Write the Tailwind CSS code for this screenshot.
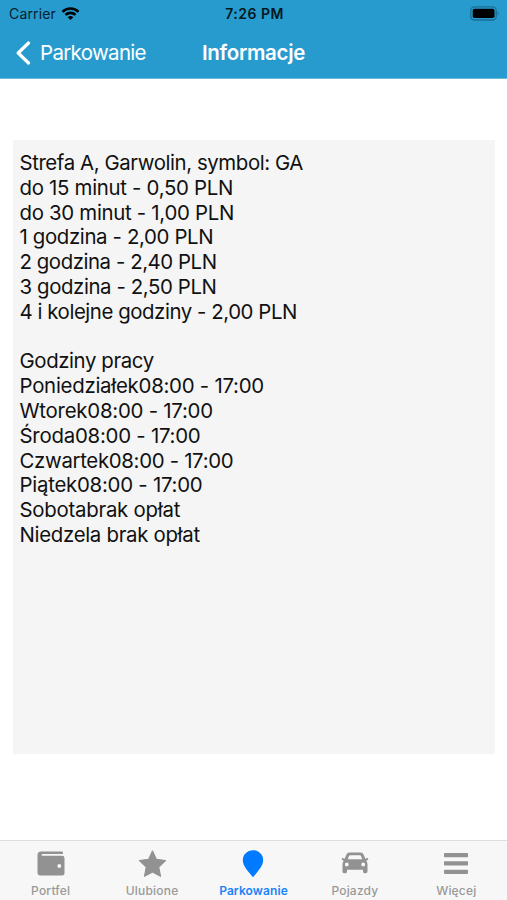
<!DOCTYPE html>
<html lang="pl">
<head>
<meta charset="utf-8">
<title>Informacje</title>
<script src="https://cdn.jsdelivr.net/npm/@tailwindcss/browser@4"></script>
</head>
<body class="bg-white">
<div class="flex h-[900px] w-[507px] flex-col overflow-hidden bg-white font-['Inter',sans-serif]">
  <header class="h-[79px] shrink-0 border-b border-[#6bbbdc] bg-[#289bce]">
    <div class="grid h-[27px] grid-cols-3 items-center pl-[9px] pr-[7px] text-[#06202c]">
      <div class="flex items-center gap-[5px]">
        <span class="pt-px text-[14px] leading-[26px] tracking-[0.16px]">Carrier</span>
        <svg class="h-[14px] w-[19px]" viewBox="0 0 18 14" fill="none" stroke="#000" stroke-width="2.6"><path d="M1 4.800a11.300 11.300 0 0 1 16 0M4 7.900a7.100 7.100 0 0 1 10 0"/><path d="M9 13.100 6.200 10.300a4 4 0 0 1 5.600 0z" fill="#000" stroke="none"/></svg>
      </div>
      <span class="pt-px text-center text-[14px] font-semibold leading-[26px] tracking-[0.5px] text-[#031720]">7:26 PM</span>
      <svg class="h-[15px] w-[30px] justify-self-end" viewBox="0 0 30 15"><rect x=".8" y=".8" width="25.4" height="13.2" rx="3.6" fill="none" stroke="#176f95" stroke-width="1.3"/><rect x="2.7" y="2.7" width="21.8" height="9.4" rx="1.8" fill="#000"/><path d="M27.6 5.2q2.2 2.2 0 4.4z" fill="#176f95"/></svg>
    </div>
    <div class="grid h-[51px] grid-cols-[186px_135px_186px] items-center text-white">
      <div class="flex items-center gap-[9px] pl-[16px]">
        <svg class="h-[24px] w-[15px]" viewBox="0 0 15 24" fill="none" stroke="currentColor" stroke-width="3.2" stroke-linecap="round" stroke-linejoin="round"><path d="M12.5 2 2.200 12l10.300 10"/></svg>
        <span class="text-[20.5px] leading-[30px] tracking-[-0.68px]">Parkowanie</span>
      </div>
      <h1 class="text-center text-[20.5px] font-semibold leading-[30px] tracking-[-0.3px]">Informacje</h1>
    </div>
  </header>

  <main class="grow px-[13px] pt-[61px]">
    <div class="h-[614px] w-[482px] bg-[#f5f5f5] pl-[6.5px] pt-[11px] text-[20.4px] leading-[24.8px] text-[#111] whitespace-nowrap">
      <p class="tracking-[-0.41px]">Strefa A, Garwolin, symbol: GA</p>
      <p class="tracking-[-0.3px]">do 15 minut - 0,50 PLN</p>
      <p class="tracking-[-0.3px]">do 30 minut - 1,00 PLN</p>
      <p class="tracking-[-0.36px]">1 godzina - 2,00 PLN</p>
      <p class="tracking-[-0.44px]">2 godzina - 2,40 PLN</p>
      <p class="tracking-[-0.4px]">3 godzina - 2,50 PLN</p>
      <p class="tracking-[-0.44px]">4 i kolejne godziny - 2,00 PLN</p>
      <p class="mt-[24.8px] tracking-[-0.4px]">Godziny pracy</p>
      <p class="tracking-[-0.26px]">Poniedziałek08:00 - 17:00</p>
      <p class="tracking-[-0.24px]">Wtorek08:00 - 17:00</p>
      <p class="tracking-[-0.24px]">Środa08:00 - 17:00</p>
      <p class="tracking-[-0.32px]">Czwartek08:00 - 17:00</p>
      <p class="tracking-[-0.25px]">Piątek08:00 - 17:00</p>
      <p class="tracking-[-0.25px]">Sobotabrak opłat</p>
      <p class="tracking-[-0.3px]">Niedzela brak opłat</p>
    </div>
  </main>

  <nav class="grid h-[60px] shrink-0 grid-cols-5 border-t border-[#dedede] bg-[#f7f7f7] text-center text-[12px] font-medium leading-[14px] tracking-[0.2px] text-[#999]">
    <div class="flex flex-col items-center pt-[8px]">
      <svg class="h-[30px] w-[30px]" viewBox="0 0 30 30"><path d="M5 2.500h21q1 0 1 1.200V5H6.500a.8.800 0 0 0 0 1.800H26q2.500 0 2.500 2.400V24q0 2.500-2.500 2.500H4.500Q1.500 26.500 1.500 23.500V6Q1.500 2.500 5 2.500z" fill="#929292"/><circle cx="23.300" cy="17" r="1.900" fill="#f7f7f7"/></svg>
      <span class="mt-[5px]">Portfel</span>
    </div>
    <div class="flex flex-col items-center pt-[8px]">
      <svg class="h-[30px] w-[30px]" viewBox="0 0 30 30"><path d="M15.500 2l3.800 8.300 9.200 1.200-6.800 6.500 1.800 9.300-8-4.400-8 4.400 1.800-9.300-6.800-6.500 9.200-1.200z" fill="#929292" stroke="#929292" stroke-width="1.200" stroke-linejoin="round"/></svg>
      <span class="mt-[5px]">Ulubione</span>
    </div>
    <div class="flex flex-col items-center pt-[8px] text-[#1a84fb]">
      <svg class="h-[30px] w-[30px]" viewBox="0 0 30 30"><path d="M15 1.200c5.700 0 10.200 4.400 10.200 10 0 6.300-6.600 12.200-9.300 16.100q-.9 1.300-1.800 0C11.400 23.400 4.800 17.500 4.800 11.200c0-5.600 4.500-10 10.200-10z" fill="#007aff"/></svg>
      <span class="mt-[5px] font-semibold tracking-[0.1px]">Parkowanie</span>
    </div>
    <div class="flex flex-col items-center pt-[8px]">
      <svg class="h-[30px] w-[30px]" viewBox="0 0 30 30"><path fill="#929292" fill-rule="evenodd" d="M9.500 3.500h11q2.300 0 3.200 2.200l1.600 4 2-.6q1 0 1 1t-1.300 1.300l-.8.300q1.300 1.500 1.300 3.500V22.400q0 1.800-1.600 1.800H24.500Q23 24.200 23 22.400v-1.600H7V22.400q0 1.800-1.500 1.800H4.100Q2.500 24.200 2.500 22.400v-7.200q0-2 1.300-3.500L3 11.400Q1.700 11.100 1.700 10.100t1-1l2 .6 1.600-4Q7.200 3.500 9.500 3.500zM10.300 6.300q-1 0-1.400 1L7.700 10.200h14.600L21.100 7.300q-.4-1-1.400-1zM6.800 13.600a1.900 1.900 0 1 0 0 3.800 1.900 1.900 0 0 0 0-3.800zM23.200 13.600a1.900 1.900 0 1 0 0 3.800 1.900 1.900 0 0 0 0-3.800z"/></svg>
      <span class="mt-[5px]">Pojazdy</span>
    </div>
    <div class="flex flex-col items-center pt-[8px]">
      <svg class="h-[30px] w-[30px]" viewBox="0 0 30 30" fill="#929292"><rect x="3" y="4" width="24" height="4.200" rx=".8"/><rect x="3" y="12.300" width="24" height="4.200" rx=".8"/><rect x="3" y="20.700" width="24" height="4.200" rx=".8"/></svg>
      <span class="mt-[5px]">Więcej</span>
    </div>
  </nav>
</div>
</body>
</html>
